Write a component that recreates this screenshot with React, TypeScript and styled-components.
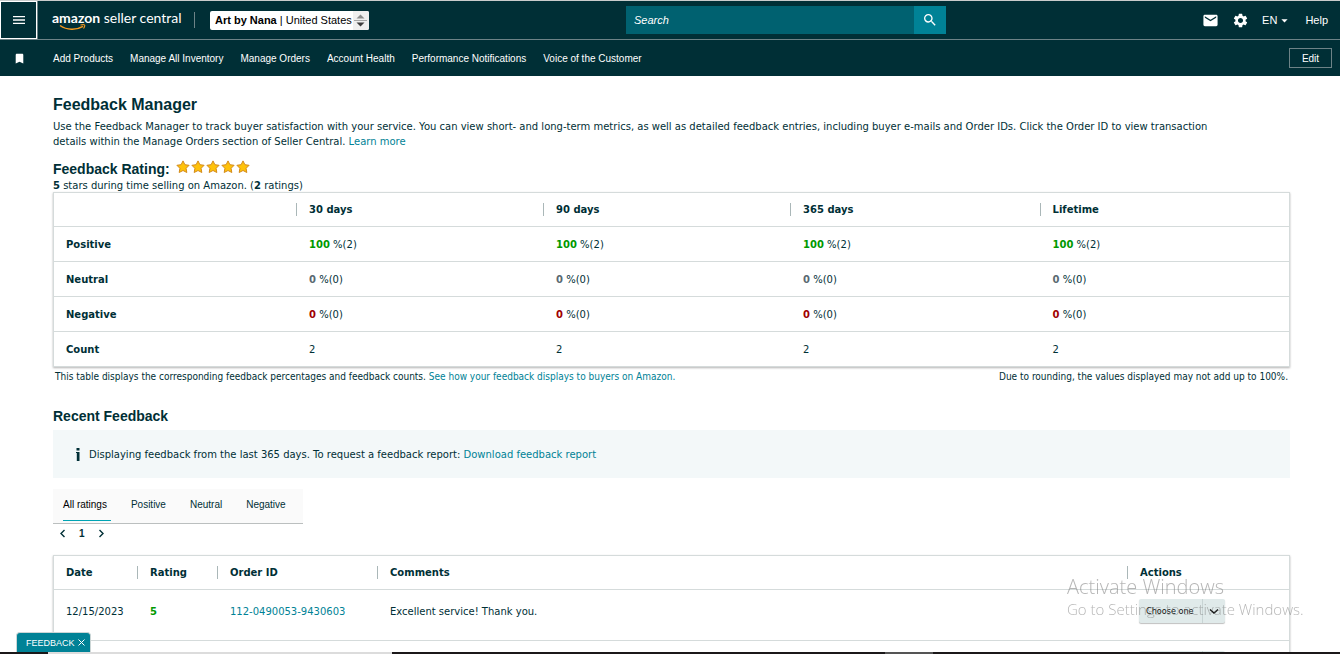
import React from "react";
import styled, { createGlobalStyle } from "styled-components";
import {
  MdArrowDropDown,
  MdBookmark,
  MdEmail,
  MdMenu,
  MdSearch,
  MdSettings,
} from "react-icons/md";

const sans = '"Liberation Sans", Arial, sans-serif';
const wide = '"DejaVu Sans", Verdana, sans-serif';
const narrow = '"DejaVu Sans Condensed", Tahoma, sans-serif';

const ink = "#002f36";
const teal = "#008296";
const line = "#d5dbdb";

const GlobalStyle = createGlobalStyle`
  * { box-sizing: border-box; }
  body {
    margin: 0;
    background: #fff;
    color: ${ink};
    font-family: ${wide};
    font-size: 10px;
  }
  button, input, select { font: inherit; color: inherit; margin: 0; }
  h1, h2, p { margin: 0; }
`;

const Shell = styled.div`
  display: flex;
  flex-direction: column;
  height: 100vh;
  overflow: hidden;
`;

/* ---------- top bars ---------- */

const TopBar = styled.header`
  display: grid;
  grid-template-columns: minmax(0, 626fr) 320px minmax(0, 394fr);
  align-items: center;
  flex: none;
  height: 40px;
  background: ${ink};
  border-top: 1px solid #c9cccc;
  border-bottom: 1px solid #6d8387;
  color: #fff;
  font-family: ${sans};
`;

const BarStart = styled.div`
  display: flex;
  align-items: center;
  height: 38px;
`;

const MenuBox = styled.div`
  border-right: 1px solid #6d8387;
  height: 38px;
`;

const MenuButton = styled.button`
  display: grid;
  place-items: center;
  width: 37px;
  height: 38px;
  padding: 0;
  background: none;
  border: 1px solid #fff;
`;

const Brand = styled.a`
  position: relative;
  width: 128px;
  margin-left: 14px;
  padding-bottom: 4px;
  color: #fff;
  font-family: Lato, "Open Sans", sans-serif;
  font-size: 14px;
  line-height: 18px;
  text-decoration: none;
  white-space: nowrap;
`;

const Smile = styled.svg`
  position: absolute;
  left: 7px;
  bottom: 0;
`;

const BarDivider = styled.span`
  width: 1px;
  height: 16px;
  margin: 0 15px 0 14px;
  background: #6d8387;
`;

const AccountButton = styled.button`
  display: flex;
  align-items: center;
  gap: 1px;
  height: 19px;
  padding: 0 0 0 5px;
  background: #fff;
  border: 0;
  border-radius: 2px;
  color: #000;
  font-size: 11px;
  white-space: nowrap;
  overflow: hidden;
`;

const Spinner = styled.span`
  display: grid;
  place-items: center;
  width: 16px;
  height: 19px;
  background: #efefef;
`;

const SearchForm = styled.form`
  display: flex;
  height: 28px;
  input {
    flex: 1;
    min-width: 0;
    padding: 0 8px;
    background: #006170;
    border: 0;
    color: #fff;
    font-size: 11px;
    font-style: italic;
  }
  input::placeholder { color: #fff; opacity: 1; }
  button {
    display: grid;
    place-items: center;
    width: 32px;
    padding: 0;
    background: ${teal};
    border: 0;
    color: #fff;
  }
`;

const BarEnd = styled.nav`
  display: flex;
  align-items: center;
  justify-content: flex-end;
  gap: 13px;
  padding-right: 12px;
  font-size: 11px;
  a, button {
    display: flex;
    align-items: center;
    padding: 0;
    background: none;
    border: 0;
    color: #fff;
    text-decoration: none;
  }
`;

const NavBar = styled.nav`
  display: flex;
  align-items: center;
  flex: none;
  height: 36px;
  padding: 0 8px 0 13px;
  background: ${ink};
  color: #fff;
  font-family: ${sans};
  font-size: 10px;
`;

const NavLinks = styled.div`
  display: flex;
  flex: 1;
  gap: 17px;
  margin-left: 27px;
  a { color: #fff; text-decoration: none; white-space: nowrap; }
`;

const EditButton = styled.button`
  width: 43px;
  height: 20px;
  padding: 0;
  background: none;
  border: 1px solid #6d8387;
`;

/* ---------- page ---------- */

const Page = styled.main`
  flex: 1;
  min-height: 0;
  overflow: auto;
  scrollbar-width: none;
  padding: 19px 50px 0 53px;
`;

const Title = styled.h1`
  font: 700 16px/20px ${sans};
`;

const SubTitle = styled.h2`
  display: flex;
  gap: 6px;
  font: 700 14px/20px ${sans};
`;

const Intro = styled.p`
  margin: 4px 0 10px;
  padding-right: 60px;
  line-height: 15px;
`;

const Summary = styled.p`
  line-height: 13px;
`;

const Link = styled.a`
  color: ${teal};
  text-decoration: none;
`;

const DataTable = styled.table`
  width: 100%;
  table-layout: fixed;
  border: 1px solid ${line};
  border-collapse: separate;
  border-spacing: 0;
  box-shadow: 0 1px 2px rgba(0, 0, 0, 0.3);
  th, td {
    padding: 0 0 0 13px;
    text-align: left;
    border-bottom: 1px solid ${line};
  }
  th:first-child, td:first-child { padding-left: 12px; }
  thead th { padding-left: 0; }
  tbody tr:last-child > * { border-bottom: 0; }
`;

const HeadRow = styled.tr`
  height: 34px;
`;

const BodyRow = styled.tr<{ $tall?: boolean }>`
  height: ${(p) => (p.$tall ? 51 : 35)}px;
  td { padding-bottom: ${(p) => (p.$tall ? 8 : 0)}px; }
  &:last-child { height: ${(p) => (p.$tall ? 51 : 34)}px; }
`;

const Divided = styled.span`
  display: block;
  padding-left: 12px;
  border-left: 1px solid #aab7b8;
  line-height: 13px;
`;

const Col = styled.col<{ $w?: string }>`
  width: ${(p) => p.$w ?? "auto"};
`;

const Score = styled.b<{ $tone: string }>`
  color: ${(p) => p.$tone};
`;

const Notes = styled.div`
  display: flex;
  justify-content: space-between;
  padding: 3px 2px 22px;
  font: 10px/14px ${narrow};
`;

const Notice = styled.div`
  display: flex;
  align-items: center;
  gap: 9px;
  height: 48px;
  margin: 4px 0 11px;
  padding-left: 23px;
  background: #f3f8f9;
`;

const Tabs = styled.div`
  display: flex;
  gap: 20px;
  width: 250px;
  height: 35px;
  padding: 0 10px;
  background: #fafafa;
  border-bottom: 1px solid #bbbfbf;
`;

const Tab = styled.button<{ $on?: boolean }>`
  height: 32px;
  padding: 0 4px 0 0;
  background: none;
  border: 0;
  border-bottom: 1px solid ${(p) => (p.$on ? "#00a4b4" : "transparent")};
  color: ${(p) => (p.$on ? "#000" : ink)};
  font: 10px ${sans};
  white-space: nowrap;
`;

const Pager = styled.nav`
  display: flex;
  align-items: center;
  gap: 13px;
  height: 18px;
  margin-bottom: 13px;
  padding-left: 6px;
  font: 700 10px ${sans};
  button {
    display: flex;
    padding: 0;
    background: none;
    border: 0;
  }
`;

const ActionSelect = styled.span`
  position: relative;
  display: block;
  width: 86px;
  margin-left: -1px;
  select {
    display: block;
    appearance: none;
    width: 100%;
    height: 24px;
    padding: 0 0 0 7px;
    background: #e0eaea;
    border: 0;
    border-radius: 2px;
    box-shadow: 0 1px 1px rgba(0, 0, 0, 0.25);
    color: #111;
    font: 9px ${narrow};
  }
  svg {
    position: absolute;
    right: 0;
    top: 0;
    pointer-events: none;
  }
`;

/* ---------- overlays ---------- */

const Watermark = styled.div`
  position: fixed;
  left: calc(100% - 273px);
  bottom: 35px;
  color: rgba(110, 110, 110, 0.5);
  font-family: "Open Sans", "Noto Sans", sans-serif;
  font-weight: 300;
  pointer-events: none;
  white-space: nowrap;
  p:first-child { font-size: 20px; line-height: 24px; }
  p:last-child { font-size: 15px; line-height: 20px; }
`;

const FeedbackTab = styled.button`
  position: fixed;
  left: 16px;
  bottom: 2px;
  display: flex;
  align-items: center;
  gap: 3px;
  height: 20px;
  padding: 0 5px 0 9px;
  background: ${teal};
  border: 1px solid #ccd6d6;
  border-bottom: 0;
  border-radius: 4px 4px 0 0;
  color: #fff;
  font: 9px ${sans};
`;

const BottomEdge = styled.div`
  position: fixed;
  inset: auto 0 0 0;
  display: flex;
  height: 2px;
  background: #1b1819;
`;

const EdgePart = styled.span<{ $from: number; $width: number; $fill: string }>`
  width: ${(p) => p.$width}px;
  margin-left: ${(p) => p.$from}px;
  background: ${(p) => p.$fill};
`;

const navItems = [
  "Add Products",
  "Manage All Inventory",
  "Manage Orders",
  "Account Health",
  "Performance Notifications",
  "Voice of the Customer",
];

const periods = ["30 days", "90 days", "365 days", "Lifetime"];

const scores = [
  { label: "Positive", value: "100", count: 2, tone: "#009900" },
  { label: "Neutral", value: "0", count: 0, tone: "#5a6a72" },
  { label: "Negative", value: "0", count: 0, tone: "#a00000" },
];

const Star = () => (
  <svg width="15" height="14" viewBox="0 0 15 14" aria-hidden="true">
    <path
      d="M7 .9 8.9 4.7l4.2.6-3 3 .7 4.2L7 10.5l-3.8 2 .7-4.2-3-3 4.2-.6z"
      fill="#ffc20a"
      stroke="#d38b1c"
      strokeWidth="1"
      strokeLinejoin="round"
    />
  </svg>
);

const Stars = styled.span`
  display: flex;
  padding-top: 1px;
`;

const Chevron = ({ flip }: { flip?: boolean }) => (
  <svg width="7" height="9" viewBox="0 0 7 9" fill="none" stroke={ink} strokeWidth="1.4" aria-hidden="true">
    <path d={flip ? "M1.5 1l3.5 3.5L1.5 8" : "M5.5 1 2 4.5 5.5 8"} />
  </svg>
);

const ChooseAction = ({ id }: { id: string }) => (
  <ActionSelect>
    <select aria-label="Action" id={id}>
      <option>Choose one</option>
    </select>
    <svg width="24" height="24" viewBox="0 0 24 24" fill="none" aria-hidden="true">
      <path d="M1.5 0v24" stroke="#c8d4d4" />
      <path d="M9 10.5l4 3.5 4-3.5" stroke="#111" strokeWidth="1.4" />
    </svg>
  </ActionSelect>
);

export default function App() {
  return (
    <Shell>
      <GlobalStyle />
      <TopBar>
        <BarStart>
          <MenuBox>
            <MenuButton aria-label="Menu">
              <MdMenu size={16} color="#fff" />
            </MenuButton>
          </MenuBox>
          <Brand href="#">
            <b>amazon</b> seller central
            <Smile width="28" height="7" viewBox="0 0 28 7" fill="none" stroke="#f79a1e" aria-hidden="true">
              <path d="M1 1.5c7 4.8 16 5 23 .8" strokeWidth="1.5" />
              <path d="M21.5 1c1.7-.4 3.4-.5 4-.1s0 2.3-1 3.6" strokeWidth="1.1" />
            </Smile>
          </Brand>
          <BarDivider />
          <AccountButton aria-haspopup="listbox">
            <span>
              <b>Art by Nana</b> | United States
            </span>
            <Spinner>
              <svg width="13" height="15" viewBox="0 0 13 15" aria-hidden="true">
                <path d="M6.5 1.500 10.5 5.500h-8z" fill="#8b8b8b" />
                <path d="M0 7.500h13" stroke="#a5a5a5" />
                <path d="M6.5 13.500 10.5 9.500h-8z" fill="#3d3d3d" />
              </svg>
            </Spinner>
          </AccountButton>
        </BarStart>
        <SearchForm role="search">
          <input aria-label="Search" placeholder="Search" />
          <button type="button" aria-label="Submit search">
            <MdSearch size={16} />
          </button>
        </SearchForm>
        <BarEnd>
          <a href="#" aria-label="Messages">
            <MdEmail size={17} />
          </a>
          <a href="#" aria-label="Settings">
            <MdSettings size={17} />
          </a>
          <button>
            EN
            <MdArrowDropDown size={15} />
          </button>
          <a href="#">Help</a>
        </BarEnd>
      </TopBar>
      <NavBar>
        <MdBookmark size={13} />
        <NavLinks>
          {navItems.map((item) => (
            <a href="#" key={item}>
              {item}
            </a>
          ))}
        </NavLinks>
        <EditButton>Edit</EditButton>
      </NavBar>

      <Page>
        <Title>Feedback Manager</Title>
        <Intro>
          Use the Feedback Manager to track buyer satisfaction with your service. You can view short- and
          long-term metrics, as well as detailed feedback entries, including buyer e-mails and Order IDs. Click
          the Order ID to view transaction details within the Manage Orders section of Seller Central.{" "}
          <Link href="#">Learn more</Link>
        </Intro>
        <SubTitle>
          Feedback Rating:
          <Stars>
            {periods.map((p) => (
              <Star key={p} />
            ))}
            <Star />
          </Stars>
        </SubTitle>
        <Summary>
          <b>5</b> stars during time selling on Amazon. (<b>2</b> ratings)
        </Summary>

        <DataTable>
          <colgroup>
            <Col $w="19.6%" />
            <Col $w="20%" />
            <Col $w="20%" />
            <Col $w="20.2%" />
            <Col />
          </colgroup>
          <thead>
            <HeadRow>
              <th aria-label="Feedback type" />
              {periods.map((p) => (
                <th key={p} scope="col">
                  <Divided>{p}</Divided>
                </th>
              ))}
            </HeadRow>
          </thead>
          <tbody>
            {scores.map((s) => (
              <BodyRow key={s.label}>
                <th scope="row">{s.label}</th>
                {periods.map((p) => (
                  <td key={p}>
                    <Score $tone={s.tone}>{s.value}</Score> %({s.count})
                  </td>
                ))}
              </BodyRow>
            ))}
            <BodyRow>
              <th scope="row">Count</th>
              {periods.map((p) => (
                <td key={p}>2</td>
              ))}
            </BodyRow>
          </tbody>
        </DataTable>
        <Notes>
          <span>
            This table displays the corresponding feedback percentages and feedback counts.{" "}
            <Link href="#">See how your feedback displays to buyers on Amazon.</Link>
          </span>
          <span>Due to rounding, the values displayed may not add up to 100%.</span>
        </Notes>

        <SubTitle>Recent Feedback</SubTitle>
        <Notice>
          <svg width="4" height="13" viewBox="0 0 4 13" fill={ink} aria-hidden="true">
            <path d="M.5 0h3v2.500h-3zM0 4h3.500v9H.8V5H0z" />
          </svg>
          <span>
            Displaying feedback from the last 365 days. To request a feedback report:{" "}
            <Link href="#">Download feedback report</Link>
          </span>
        </Notice>

        <Tabs role="tablist">
          <Tab role="tab" aria-selected="true" $on>
            All ratings
          </Tab>
          <Tab role="tab">Positive</Tab>
          <Tab role="tab">Neutral</Tab>
          <Tab role="tab">Negative</Tab>
        </Tabs>
        <Pager aria-label="Pages">
          <button aria-label="Previous page">
            <Chevron />
          </button>
          <span>1</span>
          <button aria-label="Next page">
            <Chevron flip />
          </button>
        </Pager>

        <DataTable>
          <colgroup>
            <Col $w="83px" />
            <Col $w="80px" />
            <Col $w="160px" />
            <Col />
            <Col $w="162px" />
          </colgroup>
          <thead>
            <HeadRow>
              <th scope="col">Date</th>
              {["Rating", "Order ID", "Comments", "Actions"].map((h) => (
                <th key={h} scope="col">
                  <Divided>{h}</Divided>
                </th>
              ))}
            </HeadRow>
          </thead>
          <tbody>
            <BodyRow $tall>
              <td>12/15/2023</td>
              <td>
                <Score $tone="#009900">5</Score>
              </td>
              <td>
                <Link href="#">112-0490053-9430603</Link>
              </td>
              <td>Excellent service! Thank you.</td>
              <td>
                <ChooseAction id="action-1" />
              </td>
            </BodyRow>
            <BodyRow $tall>
              <td />
              <td />
              <td />
              <td />
              <td>
                <ChooseAction id="action-2" />
              </td>
            </BodyRow>
          </tbody>
        </DataTable>
      </Page>

      <Watermark>
        <p>Activate Windows</p>
        <p>Go to Settings to activate Windows.</p>
      </Watermark>
      <FeedbackTab>
        FEEDBACK
        <svg width="7" height="7" viewBox="0 0 7 7" stroke="#fff" aria-hidden="true">
          <path d="M.5.5l6 6M6.5.5l-6 6" />
        </svg>
      </FeedbackTab>
      <BottomEdge>
        <EdgePart $from={48} $width={344} $fill="#dcdcdc" />
        <EdgePart $from={493} $width={48} $fill="#555" />
      </BottomEdge>
    </Shell>
  );
}
